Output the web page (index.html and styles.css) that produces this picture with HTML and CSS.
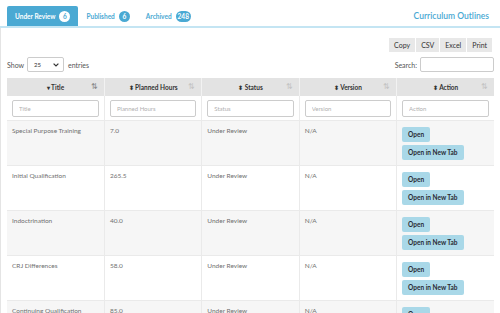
FILE: index.html
```
<!DOCTYPE html>
<html lang="en">
<head>
    <link rel="stylesheet" href="styles.css">
</head>
<body>
    <div class="tabs">
        <div class="tab active">Under Review <span class="badge">6</span></div>
        <div class="tab">Published <span class="badge">6</span></div>
        <div class="tab">Archived <span class="badge">248</span></div>
        <div class="page-title">Curriculum Outlines</div>
    </div>
    <div class="panel">
        <div class="toolbar">
            <button class="tool">Copy</button>
            <button class="tool">CSV</button>
            <button class="tool">Excel</button>
            <button class="tool">Print</button>
        </div>
        <div class="controls">
            <label class="show">Show
                <span class="select">25 <svg width="6" height="4" viewBox="0 0 6 4"><path d="M0.6 0.6 L3 3 L5.4 0.6" fill="none" stroke="#333" stroke-width="1.2"/></svg></span>
                entries</label>
            <label class="search">Search: <input type="text"></label>
        </div>
        <table class="grid">
            <tr class="head">
                <th><span class="caret">&#9662;</span> Title<span class="sort dark">&#8645;</span></th>
                <th><span class="caret">&#11021;</span> Planned Hours<span class="sort">&#8645;</span></th>
                <th><span class="caret">&#11021;</span> Status<span class="sort">&#8645;</span></th>
                <th><span class="caret">&#11021;</span> Version<span class="sort">&#8645;</span></th>
                <th><span class="caret">&#11021;</span> Action<span class="sort">&#8645;</span></th>
            </tr>
            <tr class="filters">
                <td><input placeholder="Title"></td>
                <td><input placeholder="Planned Hours"></td>
                <td><input placeholder="Status"></td>
                <td><input placeholder="Version"></td>
                <td><input placeholder="Action"></td>
            </tr>
            <tr class="odd">
                <td>Special Purpose Training</td>
                <td>7.0</td>
                <td>Under Review</td>
                <td>N/A</td>
                <td><button class="act">Open</button><button class="act">Open in New Tab</button></td>
            </tr>
            <tr>
                <td>Initial Qualification</td>
                <td>265.5</td>
                <td>Under Review</td>
                <td>N/A</td>
                <td><button class="act">Open</button><button class="act">Open in New Tab</button></td>
            </tr>
            <tr class="odd">
                <td>Indoctrination</td>
                <td>40.0</td>
                <td>Under Review</td>
                <td>N/A</td>
                <td><button class="act">Open</button><button class="act">Open in New Tab</button></td>
            </tr>
            <tr>
                <td>CRJ Differences</td>
                <td>58.0</td>
                <td>Under Review</td>
                <td>N/A</td>
                <td><button class="act">Open</button><button class="act">Open in New Tab</button></td>
            </tr>
            <tr class="odd">
                <td>Continuing Qualification</td>
                <td>85.0</td>
                <td>Under Review</td>
                <td>N/A</td>
                <td><button class="act">Open</button><button class="act">Open in New Tab</button></td>
            </tr>
        </table>
    </div>
</body>
</html>
```
FILE: styles.css
```
body
{
    margin: 0;
    font-family: Lato, "Open Sans", sans-serif;
    font-size: 6.5px;
    color: #707070;
    background: #fff;
    overflow: hidden;
}
.tabs
{
    display: flex;
    align-items: stretch;
    height: 20px;
    margin-top: 6px;
    padding: 0 11px 0 7px;
    border-bottom: 2px solid #c4e5f3;
}
.tab
{
    display: flex;
    align-items: center;
    padding: 0 8px 0 8px;
    color: #4aa9d3;
    font-weight: bold;
    font-size: 6.5px;
}
.tab.active
{
    background: #4aa9d3;
    color: #fff;
    border-radius: 2px 2px 0 0;
}
.badge
{
    display: inline-block;
    margin-left: 4px;
    min-width: 7px;
    height: 11px;
    line-height: 11px;
    padding: 0 2px;
    border-radius: 6px;
    background: #4aa9d3;
    color: #fff;
    font-size: 6.5px;
    font-weight: bold;
    text-align: center;
}
.active .badge
{
    background: #fff;
    color: #4aa9d3;
}
.page-title
{
    margin-left: auto;
    display: flex;
    align-items: center;
    color: #4aa9d3;
    font-size: 8.5px;
    font-weight: 600;
}
.panel
{
    border-left: 1px solid #e4e4e4;
    padding: 10px 6px 0 6px;
    height: 300px;
}
.toolbar
{
    display: flex;
    justify-content: flex-end;
    margin-right: 2px;
}
.tool
{
    border: none;
    background: #e8e8e8;
    color: #333;
    font-family: Lato, sans-serif;
    font-size: 7px;
    height: 14px;
    padding: 0 5px;
    margin-left: 1px;
}
.controls
{
    display: flex;
    justify-content: space-between;
    align-items: center;
    margin-top: 5px;
    height: 15px;
    font-size: 7px;
}
.show, .search
{
    display: flex;
    align-items: center;
    color: #555;
}
.select
{
    display: flex;
    align-items: center;
    justify-content: space-between;
    width: 25px;
    height: 13px;
    margin: 0 4px 0 3px;
    padding: 0 4px 0 6px;
    border: 1px solid #ccc;
    border-radius: 2px;
    color: #333;
    font-size: 6px;
}
.search input
{
    width: 72px;
    height: 13px;
    margin-left: 3px;
    border: 1px solid #ccc;
    border-radius: 2px;
    padding: 0;
}
.grid
{
    width: 487px;
    margin-top: 6px;
    border-collapse: collapse;
    table-layout: fixed;
}
.grid td, .grid th
{
    border-right: 1px solid #eaeaea;
    border-bottom: 1px solid #eaeaea;
}
.grid td:last-child, .grid th:last-child
{
    border-right: none;
}
.head th
{
    position: relative;
    height: 18px;
    padding: 0;
    background: #e3e3e3;
    color: #333;
    font-weight: bold;
    font-size: 6.5px;
    border-right: 1px solid #f2f2f2;
    border-bottom: none;
}
.caret
{
    font-size: 5.5px;
    color: #333;
}
.sort
{
    position: absolute;
    right: 6px;
    top: 4px;
    color: #c4c4c4;
    font-weight: normal;
    font-size: 7.5px;
}
.sort.dark
{
    color: #888;
}
.filters td
{
    height: 24px;
    padding: 0 5px;
}
.filters input
{
    box-sizing: border-box;
    width: 100%;
    height: 17px;
    border: 1px solid #ccc;
    border-radius: 2px;
    padding: 0 6px;
    font-family: Lato, sans-serif;
    font-size: 6px;
}
.filters input::placeholder
{
    color: #b0b0b0;
}
.grid tr:not(.head):not(.filters) td
{
    height: 33px;
    vertical-align: top;
    padding: 6px 5px 5px 5px;
}
tr.odd td
{
    background: #f6f6f6;
}
.act
{
    display: block;
    height: 15px;
    margin-bottom: 3px;
    padding: 0 6px;
    border: none;
    border-radius: 2px;
    background: #a9d8e8;
    color: #2a2a33;
    font-family: Lato, sans-serif;
    font-weight: bold;
    font-size: 6.5px;
}
.act:last-child
{
    margin-bottom: 0;
}
```
